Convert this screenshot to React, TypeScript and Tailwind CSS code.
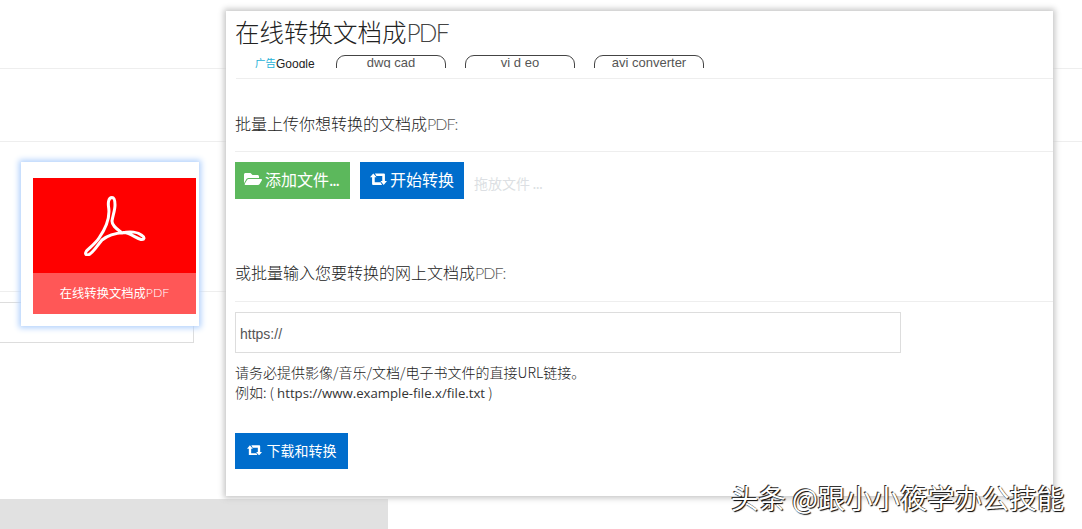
import { FaFolderOpen } from "react-icons/fa";

const cjk = "font-['Noto_Sans_CJK_SC','Liberation_Sans',sans-serif]";
const thin = "font-['Lato',sans-serif] font-light";

function Pill({ label, gap }: { label: string; gap: string }) {
  return (
    <div className={`w-[110px] ${gap} h-[24px] shrink-0 rounded-[9px] border border-[#444] text-center text-[13px] leading-[14px] text-[#555] font-['Liberation_Sans',sans-serif]`}>
      {label}
    </div>
  );
}

function RetweetIcon({ size }: { size: number }) {
  return (
    <svg width={size} height={(size * 13) / 18} viewBox="0 0 18 13" fill="currentColor" className="shrink-0">
      <path d="M0 4.6L3.5 0.4L7 4.6H5V9.8H11.2L12.8 12.6H3.2C2.6 12.6 2.2 12.2 2.2 11.6V4.6Z" />
      <path d="M18 8.4L14.5 12.6L11 8.4H13V3.2H6.8L5.2 0.4H14.8C15.4 0.4 15.8 0.8 15.8 1.4V8.4Z" />
    </svg>
  );
}

function AcrobatLogo() {
  return (
    <svg width="62" height="60" viewBox="0 0 62 60" fill="none" stroke="#fff" strokeWidth="3" strokeLinejoin="round">
      <path d="M28 1.5C24 1.5 24 8 24.7 12C26 22 22 32 15 42C11 48 5 52 2.5 55C0.5 58 2 59.5 5 58.5C9 57 13 50 18 44C24 39 33 37 40 36.5C46 37 52 42 57 43.5C60.5 44 61 41.5 58 39.5C54 36 46 35 38 37C33 33 28 30 28 25C29 19 31 14 31 9C31 4 30 1.5 28 1.5Z" />
    </svg>
  );
}

export default function App() {
  return (
    <div className={`relative h-[529px] w-[1082px] overflow-hidden bg-white ${cjk}`}>
      {/* page behind the dialog */}
      <div className="h-[69px] border-b border-[#eeeeee]" />
      <div className="h-[73px] border-b border-[#eeeeee]" />
      <div className="h-[150px] w-[226px] border-b border-[#eeeeee]" />
      <div className="mt-[10px] h-[41px] w-[194px] border border-l-0 border-[#dddddd]" />
      <div className="mt-[156px] h-[30px] w-[388px] bg-[#e1e1e1]" />

      {/* floating tile */}
      <div className="absolute left-[21px] top-[162px] h-[164px] w-[178px] bg-white pl-[12px] pt-[16px] shadow-[0_0_6px_2px_#b0d0fc]">
        <div className="flex h-[95px] w-[163px] items-center justify-center bg-[#ff0000]">
          <AcrobatLogo />
        </div>
        <div className="flex h-[41px] w-[163px] items-center justify-center bg-[#ff5757] text-[12.3px] text-white">
          在线转换文档成<span className={thin}>PDF</span>
        </div>
      </div>

      {/* dialog */}
      <div className="absolute left-[226px] top-[11px] h-[485px] w-[827px] bg-white shadow-[0_0_6px_2px_#c4c4c4]">
        <h1 className="ml-[9px] h-[44px] pt-[2px] text-[24.5px] font-light leading-[38px] text-[#222]">
          在线转换文档成<span className={`${thin} tracking-[-1.8px] text-[#444]`}>PDF</span>
        </h1>
        <div className="ml-[10px] border-b border-[#eeeeee]">
          <div className="flex h-[13px] items-start overflow-hidden">
            <div className="ml-[19px] mt-[2px] flex w-[81px] shrink-0 items-start">
              <span className="text-[10.5px] leading-[12px] text-[#27b3d8]">广告</span>
              <span className="text-[12px] leading-[14px] text-[#222] font-['Liberation_Sans',sans-serif]">Google</span>
            </div>
            <Pill label="dwg cad" gap="" />
            <Pill label="vi d eo" gap="ml-[19px]" />
            <Pill label="avi converter" gap="ml-[19px]" />
          </div>
          <div className="h-[10px]" />
        </div>

        <section className="ml-[9px] mt-[35px] h-[38px] border-b border-[#eeeeee] text-[16px] font-light leading-[18px] text-[#222]">
          批量上传你想转换的文档成<span className={`${thin} tracking-[-1px] text-[#555]`}>PDF:</span>
        </section>

        <div className="ml-[9px] mt-[10px] flex h-[37px] items-start">
          <button className="flex h-[37px] w-[115px] items-center justify-start gap-[3px] bg-[#5cb85c] pb-[3px] pl-[9px] text-[16px] text-white">
            <FaFolderOpen className="text-[18px]" />
            <span>添加文件<span className="tracking-[-1.2px]">...</span></span>
          </button>
          <button className="ml-[10px] flex h-[37px] w-[104px] items-center justify-center gap-[3px] bg-[#006dcc] pb-[3px] text-[16px] text-white">
            <RetweetIcon size={17} />
            开始转换
          </button>
          <span className="ml-[10px] mt-[11px] text-[14px] leading-[20px] text-[#dcdfe3]">拖放文件<span className="tracking-[-0.6px]"> ...</span></span>
        </div>

        <section className="ml-[9px] mt-[64px] h-[39px] border-b border-[#eeeeee] text-[16px] font-light leading-[18px] text-[#222]">
          或批量输入您要转换的网上文档成<span className={`${thin} tracking-[-1px] text-[#555]`}>PDF:</span>
        </section>

        <div className="ml-[9px] mt-[10px] flex h-[41px] w-[666px] items-center border border-[#dddddd] pl-[4px] pt-[3px] text-[14px] text-[#555] font-['Liberation_Sans',sans-serif]">
          https://
        </div>

        <div className="ml-[9px] mt-[9px] text-[14px] font-light leading-[20px] text-[#222]">
          <p>请务必提供影像/音乐/文档/电子书文件的直接URL链接。</p>
          <p>
            例如: ( <span className="font-['Open_Sans',sans-serif] font-normal text-[13.2px] text-[#333]">https://www.example-file.x/file.txt</span> )
          </p>
        </div>

        <button className="ml-[9px] mt-[30px] flex h-[36px] w-[113px] items-center justify-center gap-[5px] bg-[#006dcc] pb-[2px] text-[14px] text-white">
          <RetweetIcon size={15} />
          下载和转换
        </button>
      </div>

      {/* watermark */}
      <div className="absolute left-[731px] top-[478px] text-[27.4px] leading-[38px] text-white [text-shadow:1px_1px_1px_#000,-1px_-1px_0_#333]">
        头条 @跟小小筱学办公技能
      </div>
    </div>
  );
}
